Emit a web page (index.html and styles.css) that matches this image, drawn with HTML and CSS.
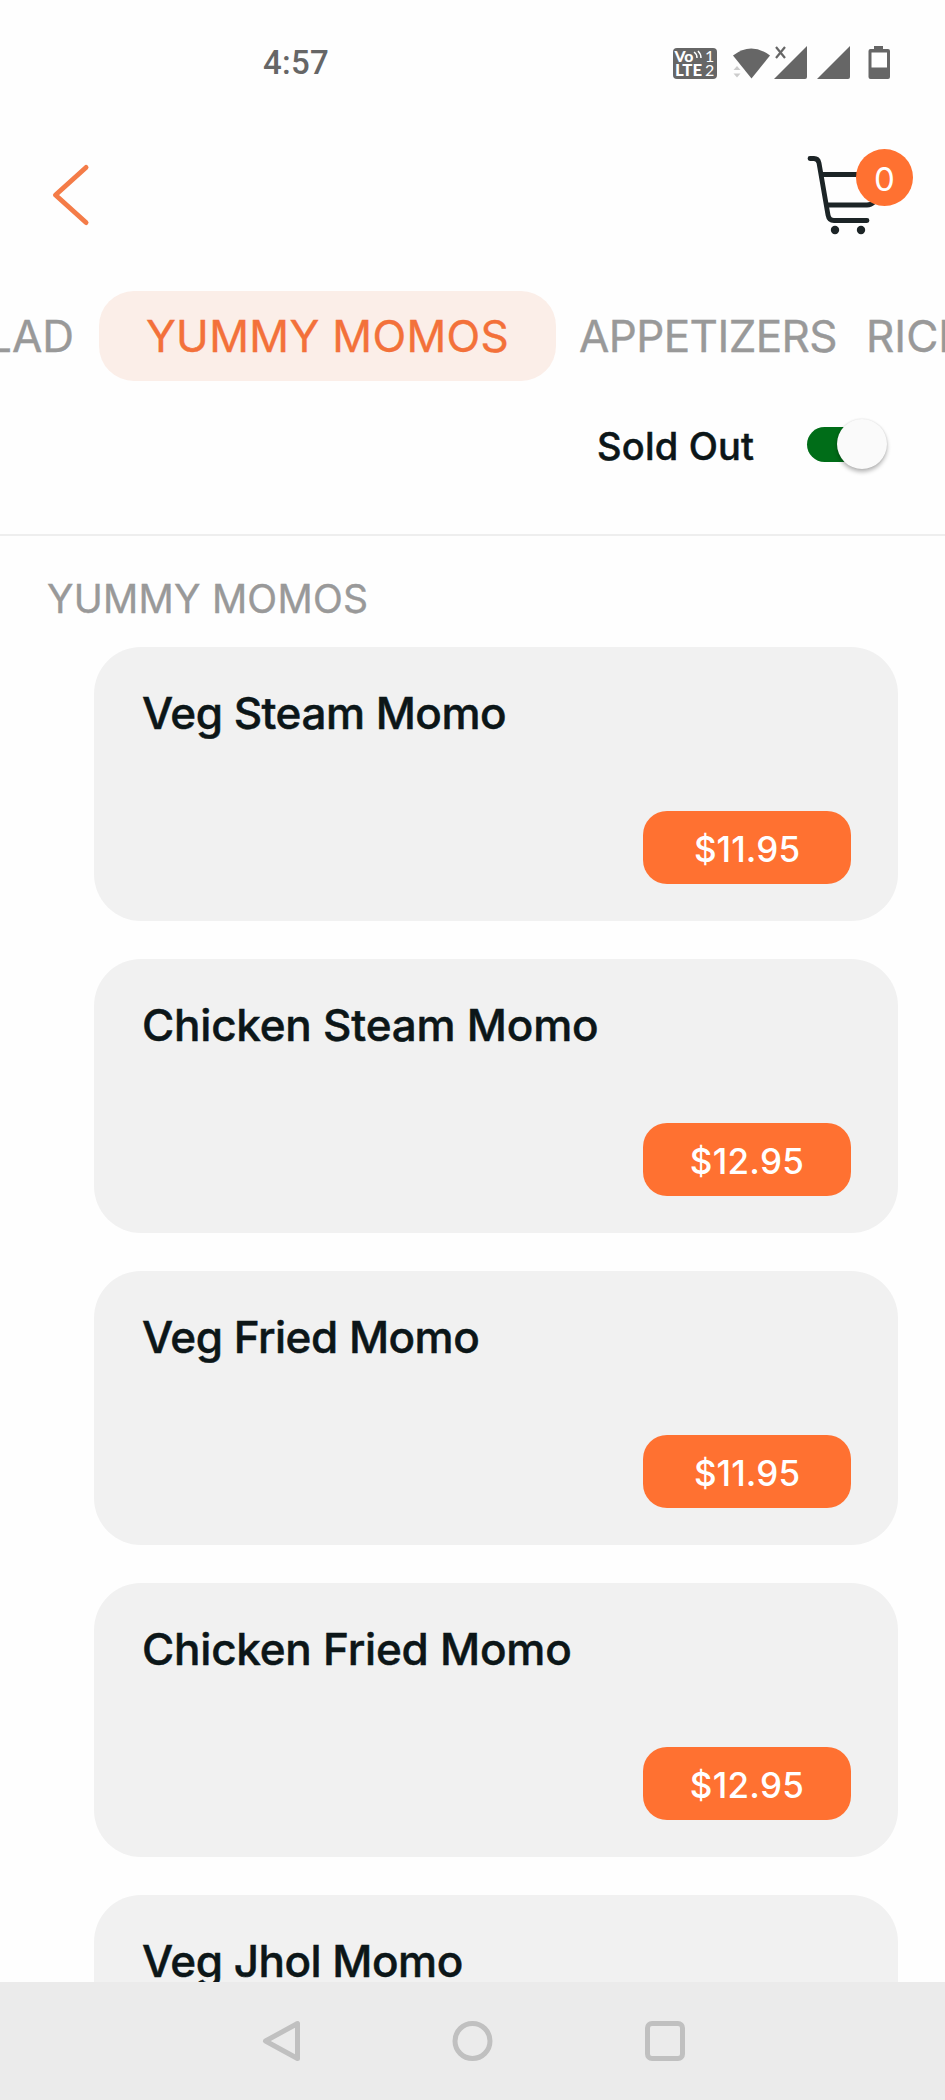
FILE: index.html
```html
<!DOCTYPE html>
<html lang="en">
<head>
<meta charset="utf-8">
<title>Menu</title>
<link rel="stylesheet" href="styles.css">
</head>
<body>
<div class="screen">
  <header class="status">
    <span class="clock">4:57</span>
    <svg class="status-icons" width="220" height="36" viewBox="672 45 220 36" fill="#666">
      <rect x="673" y="48" width="44" height="31" rx="4"/>
      <g fill="#fff" font-family="Lato, sans-serif" font-weight="900">
        <text x="674.5" y="61.5" font-size="15.5" textLength="19" lengthAdjust="spacingAndGlyphs">Vo</text>
        <text x="675" y="75.5" font-size="17" textLength="27" lengthAdjust="spacingAndGlyphs">LTE</text>
        <text x="705" y="61.5" font-size="16" font-weight="400">1</text>
        <text x="705" y="75.5" font-size="16" font-weight="400">2</text>
      </g>
      <path d="M694 52q3 2 3 6M698 51q3 3 3 7" fill="none" stroke="#fff" stroke-width="1.5"/>
      <path d="M733 55.500Q751 41.500 770 55.500L751.500 78.500Z"/>
      <path d="M733.500 70l3.500-4 3.500 4zM733.500 73.500h7l-3.500 4z" fill="#ccc"/>
      <path d="M776 47l9 11M785 47l-9 11" stroke="#666" stroke-width="2.2" fill="none"/>
      <path d="M807 46v31q0 2-2 2h-31zM850 46v31q0 2-2 2h-31z"/>
      <path fill-rule="evenodd" d="M874 46h9v3h5q2 0 2 2v26q0 2-2 2h-17.500q-2 0-2-2V51q0-2 2-2h3.500zM871.500 52.500V67.500H887V52.500z"/>
    </svg>
  </header>
  <nav class="topbar">
    <svg class="back" width="40" height="64" viewBox="50 163 40 64" fill="none" stroke="#f47c48" stroke-width="5" stroke-linecap="round" stroke-linejoin="round"><path d="M86 167.500L55.500 195L86 222.500"/></svg>
    <div class="cart">
      <svg width="76" height="84" viewBox="806 152 76 84" fill="none" stroke="#1c2426" stroke-width="4.800" stroke-linecap="round" stroke-linejoin="round">
        <path d="M810 158.500H814Q818 158.500 819 163L828 215Q829 220.500 834 220.500H867M822 174.500H868M828 205H867Q871 205 874 202"/>
        <circle cx="835" cy="230" r="4.200" fill="#1c2426" stroke="none"/><circle cx="861" cy="230" r="4.200" fill="#1c2426" stroke="none"/>
      </svg>
      <span class="badge">0</span>
    </div>
  </nav>
  <div class="tabs">
    <span class="tab tab-prev">SALAD</span>
    <span class="tab tab-active">YUMMY MOMOS</span>
    <span class="tab tab-next">APPETIZERS</span>
    <span class="tab tab-last">RICE</span>
  </div>
  <div class="filter">
    <span class="filter-label">Sold Out</span>
    <span class="switch"><span class="thumb"></span></span>
  </div>
  <main class="menu">
    <h2 class="heading">YUMMY MOMOS</h2>
    <div class="list">
      <article class="card"><h3 class="name">Veg Steam Momo</h3><span class="price">$11.95</span></article>
      <article class="card"><h3 class="name name-long">Chicken Steam Momo</h3><span class="price price-wide">$12.95</span></article>
      <article class="card"><h3 class="name">Veg Fried Momo</h3><span class="price">$11.95</span></article>
      <article class="card"><h3 class="name name-long">Chicken Fried Momo</h3><span class="price price-wide">$12.95</span></article>
      <article class="card"><h3 class="name">Veg Jhol Momo</h3><span class="price">$11.95</span></article>
    </div>
  </main>
  <footer class="navbar">
    <svg width="44" height="44" viewBox="0 0 44 44"><path d="M38.500 4.500V39.500L6.500 22Z"/></svg>
    <svg width="44" height="44" viewBox="0 0 44 44"><circle cx="21.500" cy="22" r="17.500"/></svg>
    <svg width="44" height="44" viewBox="0 0 44 44"><rect x="4.500" y="4.500" width="35" height="35" rx="4.500"/></svg>
  </footer>
</div>
</body>
</html>
```
FILE: styles.css
```css
* { box-sizing: border-box; }
body { margin: 0; background: #fefefe; font-family: Inter, "Liberation Sans", sans-serif; color: #0c1618; }
.screen { width: 945px; height: 2100px; overflow: hidden; display: flex; flex-direction: column; }
h2, h3 { margin: 0; font-weight: 400; }
svg { display: block; }

.status { height: 125px; flex: none; display: flex; align-items: flex-start; justify-content: space-between; padding: 45px 53px 0 263px; }
.clock { font: 500 33px/36px Roboto, sans-serif; letter-spacing: 0.3px; color: #666; }

.topbar { height: 166px; flex: none; display: flex; align-items: flex-start; justify-content: space-between; padding: 27px 32px 0 50px; }
.back { margin-top: 11px; }
.cart { position: relative; width: 107px; height: 84px; }
.badge { position: absolute; right: 0; top: -3px; width: 57px; height: 57px; border-radius: 50%; background: #ff7131; color: #fff; font: 400 33px/61px Inter, sans-serif; text-align: center; }

.tabs { height: 90px; flex: none; display: flex; align-items: center; width: 945px; overflow: hidden; white-space: nowrap; }
.tab { flex: none; color: #999; font-size: 44px; line-height: 90px; -webkit-text-stroke: 0.4px currentColor; }
.tab-prev { width: 99px; padding-right: 25px; display: flex; justify-content: flex-end; }
.tab-active { width: 457px; border-radius: 35px; background: #fbeee8; color: #f3713a; text-align: center; letter-spacing: 0.35px; }
.tab-next { width: 310px; padding-left: 23px; letter-spacing: -0.6px; }

.filter { height: 155px; flex: none; border-bottom: 2px solid #eee; display: flex; align-items: flex-start; justify-content: flex-end; padding: 38px 57px 0 0; }
.filter-label { font-weight: 500; font-size: 38px; line-height: 54px; width: 210px; white-space: nowrap; letter-spacing: 0.2px; -webkit-text-stroke: 0.5px currentColor; }
.switch { position: relative; width: 81px; height: 35px; margin-top: 8px; }
.switch::before { content: ""; position: absolute; left: 0; top: 0; width: 68px; height: 35px; border-radius: 18px; background: #006d18; }
.thumb { position: absolute; left: 30px; top: -8px; width: 50px; height: 50px; border-radius: 50%; background: #fafafa; box-shadow: 0 3px 4px rgba(0,0,0,.28), 0 0 2px rgba(0,0,0,.12); }

.menu { flex: 1; min-height: 0; overflow: hidden; padding: 38px 47px 0 94px; }
.heading { margin-left: -47px; height: 72.5px; color: #999; font-size: 39px; line-height: 50px; letter-spacing: 0.25px; white-space: nowrap; -webkit-text-stroke: 0.4px currentColor; }
.list { display: flex; flex-direction: column; gap: 38px; }
.card { flex: none; height: 274px; border-radius: 47px; background: #f1f1f1; padding: 38px 47px 37px 48px; display: flex; flex-direction: column; justify-content: space-between; }
.name { font-weight: 500; font-size: 44px; line-height: 56px; white-space: nowrap; letter-spacing: -0.5px; -webkit-text-stroke: 0.5px currentColor; }
.name-long { letter-spacing: -0.22px; }
.price { align-self: flex-end; width: 208px; height: 73px; border-radius: 24px; background: #ff7131; color: #fff; font-weight: 500; font-size: 35px; line-height: 76px; text-align: center; letter-spacing: 0.1px; }
.price-wide { letter-spacing: 0.3px; }

.navbar { height: 118px; flex: none; background: #ebebeb; display: flex; align-items: flex-start; gap: 148px; padding: 37px 0 0 259px; }
.navbar svg { fill: none; stroke: #c0c0c0; stroke-width: 5; stroke-linejoin: round; }
```
